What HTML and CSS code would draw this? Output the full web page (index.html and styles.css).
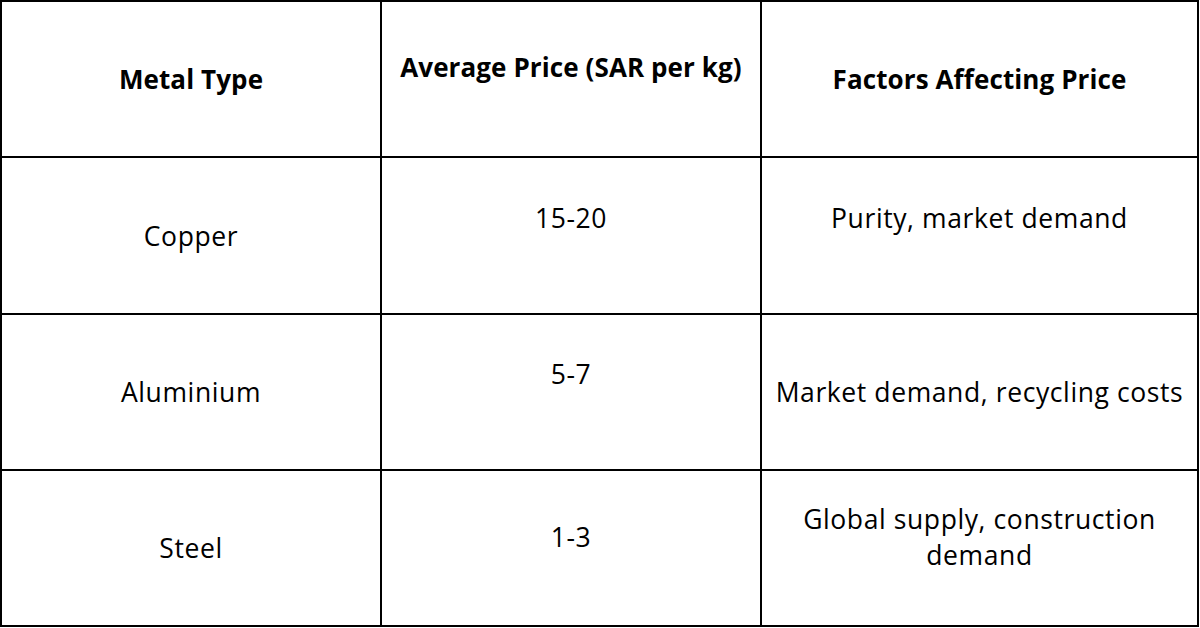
FILE: index.html
```html
<!DOCTYPE html>
<html lang="en">
<head>
<meta charset="utf-8">
<title>Metal Prices</title>
<link rel="stylesheet" href="styles.css">
</head>
<body>
<div class="table">
  <div class="cell head">Metal Type</div>
  <div class="cell head up-h">Average Price (SAR per kg)</div>
  <div class="cell head">Factors Affecting Price</div>

  <div class="cell">Copper</div>
  <div class="cell up">15-20</div>
  <div class="cell up">Purity, market demand</div>

  <div class="cell">Aluminium</div>
  <div class="cell up">5-7</div>
  <div class="cell">Market demand, recycling costs</div>

  <div class="cell">Steel</div>
  <div class="cell up-s">1-3</div>
  <div class="cell up-s">Global supply, construction demand</div>
</div>
</body>
</html>
```

FILE: styles.css
```css
html, body {
  margin: 0;
  padding: 0;
  background: #fff;
}

.table {
  display: grid;
  grid-template-columns: 378px 378px 435px;
  grid-template-rows: 154px 155px 154px 154px;
  gap: 2px;
  padding: 2px;
  width: 1195px;
  background: #000;
  font-family: "Open Sans", "Liberation Sans", sans-serif;
  font-size: 26.5px;
  line-height: 36px;
  letter-spacing: 0.6px;
  color: #000;
}

.cell {
  background: #fff;
  display: flex;
  align-items: center;
  justify-content: center;
  text-align: center;
  padding: 0 12px;
}

.head {
  font-size: 26px;
  font-weight: 700;
  letter-spacing: 0.1px;
}

.up {
  padding-bottom: 36px;
}

.up-h {
  padding-bottom: 24px;
}

.up-s {
  padding-bottom: 22px;
}
```
